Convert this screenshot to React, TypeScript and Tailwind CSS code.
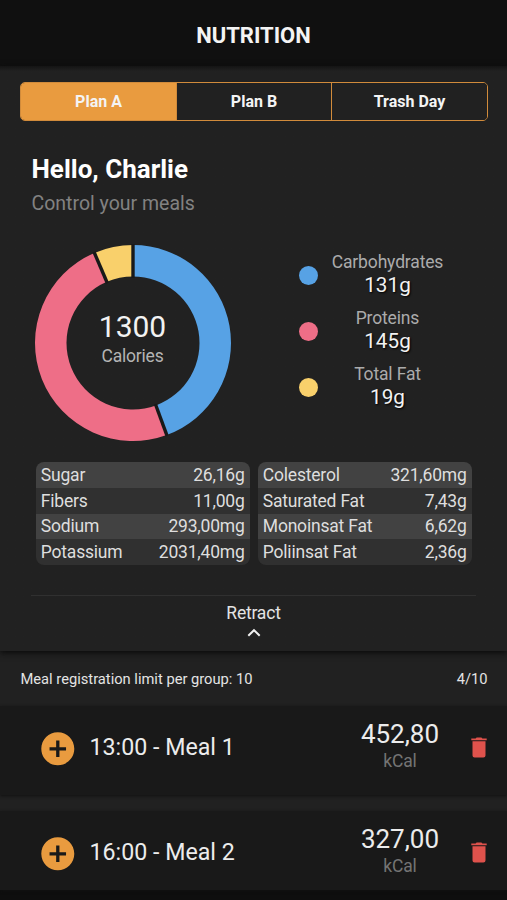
import { useState } from "react";
import { MdAddCircle } from "react-icons/md";

const plans = ["Plan A", "Plan B", "Trash Day"];

const macros = [
	{ label: "Carbohydrates", grams: 131, color: "#57a2e5" },
	{ label: "Proteins", grams: 145, color: "#ee6e87" },
	{ label: "Total Fat", grams: 19, color: "#f9d06b" },
];

const nutrients = [
	[
		{ name: "Sugar", value: "26,16g" },
		{ name: "Fibers", value: "11,00g" },
		{ name: "Sodium", value: "293,00mg" },
		{ name: "Potassium", value: "2031,40mg" },
	],
	[
		{ name: "Colesterol", value: "321,60mg" },
		{ name: "Saturated Fat", value: "7,43g" },
		{ name: "Monoinsat Fat", value: "6,62g" },
		{ name: "Poliinsat Fat", value: "2,36g" },
	],
];

const meals = [
	{ name: "13:00 - Meal 1", kcal: "452,80" },
	{ name: "16:00 - Meal 2", kcal: "327,00" },
];

const point = (radius: number, fraction: number) => {
	const angle = fraction * 2 * Math.PI;
	return `${100 + radius * Math.sin(angle)} ${100 - radius * Math.cos(angle)}`;
};

const MacroChart = () => {
	const total = macros.reduce((sum, m) => sum + m.grams, 0);
	let start = 0;
	const slices = macros.map((m) => {
		const from = start;
		start += m.grams / total;
		return { ...m, from, to: start };
	});

	return (
		<div className="relative w-[200px] h-[200px]">
			<svg viewBox="0 0 200 200" className="w-full h-full">
				{slices.map(({ label, color, from, to }) => {
					const large = to - from > 0.5 ? 1 : 0;
					return (
						<path
							key={label}
							fill={color}
							d={`M${point(98, from)} A98 98 0 ${large} 1 ${point(98, to)} L${point(66.5, to)} A66.5 66.5 0 ${large} 0 ${point(66.5, from)} Z`}
						/>
					);
				})}
				{slices.map(({ label, from }) => (
					<path
						key={label}
						stroke="#191919"
						strokeWidth="3.4"
						d={`M${point(65, from)} L${point(99, from)}`}
					/>
				))}
			</svg>
			<div className="absolute inset-0 flex flex-col items-center pt-[66px] pr-[1px]">
				<span className="text-[30px] leading-[36px] text-[#f2f2f2]">1300</span>
				<span className="text-[17.5px] leading-[23px] tracking-[-0.2px] text-[#b4b4b4]">
					Calories
				</span>
			</div>
		</div>
	);
};

const TrashIcon = () => (
	<svg viewBox="0 0 16 21" className="w-4 h-[21px]" fill="#df524c">
		<path d="M0.3 1.6 H4.6 L5.6 0.5 H10.4 L11.4 1.6 H15.7 V3.3 H0.3 Z" />
		<path d="M1.5 4.3 H14.5 V18.4 A2.1 2.1 0 0 1 12.4 20.5 H3.6 A2.1 2.1 0 0 1 1.5 18.4 Z" />
	</svg>
);

const App = () => {
	const [plan, setPlan] = useState("Plan A");

	return (
		<div className="w-[507px] h-[900px] overflow-hidden bg-[#0e0e0e] font-['Roboto',sans-serif] flex flex-col">
			<header className="relative z-10 h-[66px] shrink-0 pt-[5px] bg-[#101010] flex items-center justify-center">
				<h1 className="text-[22px] font-bold text-[#f4f4f4]">NUTRITION</h1>
			</header>

			<section className="relative z-20 h-[585px] shrink-0 flex flex-col shadow-[0_2px_6px_#0a0a0a] bg-linear-to-b from-[#141414] to-[#212121] to-[5px]">
				<div className="mt-4 mx-5 h-[39px] w-[468px] grid grid-cols-[156px_155px_155px] border border-[#d18b3b] rounded-[5px] overflow-hidden">
					{plans.map((p) => (
						<button
							key={p}
							onClick={() => setPlan(p)}
							className={`text-[16px] font-bold text-[#f4f4f4] border-[#d18b3b] not-last:border-r ${
								p === plan ? "bg-[#e99b3f]" : "bg-[#212121]"
							}`}
						>
							{p}
						</button>
					))}
				</div>

				<div className="pl-[31.5px] pt-[31px]">
					<h2 className="text-[26px] leading-[34px] font-bold text-white">
						Hello, Charlie
					</h2>
					<p className="text-[19.5px] leading-[36px] -mb-[2px] text-[#828282]">
						Control your meals
					</p>
				</div>

				<div className="flex pl-[33px] mt-[23px]">
					<MacroChart />
					<div className="ml-[66px] pt-[7px] flex flex-col">
						{macros.map(({ label, grams, color }) => (
							<div key={label} className="h-[56.3px] flex">
								<span
									className="w-[19px] h-[19px] mt-[15.5px] rounded-full"
									style={{ backgroundColor: color }}
								/>
								<div className="w-[139px] pt-[0.6px] flex flex-col items-center">
									<span className="text-[17.5px] leading-[22px] tracking-[-0.15px] text-[#ababab]">
										{label}
									</span>
									<span className="text-[20.7px] leading-[25px] text-[#f2f2f2] [text-shadow:1px_1px_2px_#000]">
										{grams}g
									</span>
								</div>
							</div>
						))}
					</div>
				</div>

				<div className="flex gap-2 pl-9 mt-[19px]">
					{nutrients.map((rows, i) => (
						<div key={i} className="w-[214px] rounded-[8px] overflow-hidden">
							{rows.map(({ name, value }) => (
								<div
									key={name}
									className="h-[25.75px] pl-[4.8px] pr-[5.4px] flex items-center justify-between text-[17.5px] tracking-[-0.2px] text-[#dedede] bg-[#303030] odd:bg-[#424242]"
								>
									<span>{name}</span>
									<span>{value}</span>
								</div>
							))}
						</div>
					))}
				</div>

				<div className="mt-[30px] mx-[31px] border-t border-[#303030] flex flex-col items-center pt-[6px]">
					<span className="text-[17.5px] leading-[23px] tracking-[-0.2px] text-[#e4e4e4]">
						Retract
					</span>
					<svg
						viewBox="0 0 14 10"
						className="w-[14px] h-[10px] mt-[3px]"
						fill="none"
						stroke="#f0f0f0"
						strokeWidth="2"
					>
						<path d="M1.3 7.8 L7 2.2 L12.7 7.8" />
					</svg>
				</div>
			</section>

			<div className="h-[55px] shrink-0 bg-[#212121] pl-[20.5px] pr-[19.5px] pt-[2px] flex items-center justify-between text-[14.7px] text-[#e4e4e4]">
				<span>Meal registration limit per group: 10</span>
				<span>4/10</span>
			</div>

			<main className="bg-[#212121] flex flex-col gap-4">
				{meals.map(({ name, kcal }) => (
					<div
						key={name}
						className="h-[89px] last:h-[79px] pl-[37.5px] bg-[#191919] shadow-[0_1px_3px_#101010] flex items-start"
					>
						<MdAddCircle className="w-[39.6px] h-[39.6px] mt-[22.6px] text-[#e99b3f]" />
						<span className="w-[263px] ml-[12.4px] mt-[25px] text-[23.2px] leading-[32px] text-[#ececec]">
							{name}
						</span>
						<div className="w-[95px] flex flex-col items-center pt-[12px]">
							<span className="text-[26px] leading-[32px] text-[#ececec]">
								{kcal}
							</span>
							<span className="text-[17.5px] leading-[23px] tracking-[-0.2px] text-[#747474]">
								kCal
							</span>
						</div>
						<div className="ml-[23.5px] mt-[30.5px]">
							<TrashIcon />
						</div>
					</div>
				))}
			</main>
		</div>
	);
};

export default App;
